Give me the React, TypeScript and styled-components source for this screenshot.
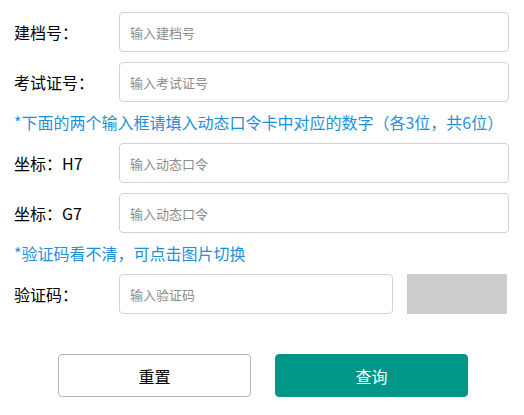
import styled, { createGlobalStyle } from "styled-components";

const Global = createGlobalStyle`
  html, body {
    margin: 0;
    padding: 0;
    background: #fff;
  }
  body {
    font-family: "Microsoft YaHei", "Noto Sans CJK SC", "Noto Sans", sans-serif;
  }
  * {
    box-sizing: border-box;
  }
`;

const Form = styled.form`
  width: 524px;
  padding: 12px 15px 0 14px;
  display: flex;
  flex-direction: column;
  gap: 10px;
`;

const Row = styled.div`
  display: flex;
  align-items: center;
  height: 40px;
`;

const Label = styled.label`
  width: 105px;
  flex-shrink: 0;
  font-size: 16px;
  color: #000;
`;

const Input = styled.input<{ $width?: number }>`
  width: ${(p) => (p.$width ? `${p.$width}px` : "390px")};
  height: 40px;
  padding: 0 10px;
  border: 1px solid #d2d2d2;
  border-radius: 4px;
  font-size: 13px;
  font-family: inherit;
  color: #333;
  outline: none;

  &::placeholder {
    color: #8c8c8c;
  }
`;

const Hint = styled.div`
  height: 21px;
  line-height: 21px;
  font-size: 16px;
  color: #1e90d8;
  white-space: nowrap;
`;

const Captcha = styled.div`
  width: 100px;
  height: 40px;
  margin-left: 14px;
  background: #cccccc;
  cursor: pointer;
`;

const Actions = styled.div`
  display: flex;
  justify-content: center;
  gap: 24px;
  margin-top: 30px;
  padding-left: 3px;
`;

const Button = styled.button<{ $primary?: boolean }>`
  width: 193px;
  height: 43px;
  border-radius: 4px;
  font-size: 16px;
  font-family: inherit;
  cursor: pointer;
  border: 1px solid ${(p) => (p.$primary ? "#009688" : "#b5b5b5")};
  background: ${(p) => (p.$primary ? "#009688" : "#fff")};
  color: ${(p) => (p.$primary ? "#fff" : "#000")};
`;

export default function App() {
  return (
    <>
      <Global />
      <Form onSubmit={(e) => e.preventDefault()}>
        <Row>
          <Label>建档号：</Label>
          <Input placeholder="输入建档号" />
        </Row>
        <Row>
          <Label>考试证号：</Label>
          <Input placeholder="输入考试证号" />
        </Row>
        <Hint>*下面的两个输入框请填入动态口令卡中对应的数字（各3位，共6位）</Hint>
        <Row>
          <Label>坐标：H7</Label>
          <Input placeholder="输入动态口令" />
        </Row>
        <Row>
          <Label>坐标：G7</Label>
          <Input placeholder="输入动态口令" />
        </Row>
        <Hint>*验证码看不清，可点击图片切换</Hint>
        <Row>
          <Label>验证码：</Label>
          <Input $width={274} placeholder="输入验证码" />
          <Captcha />
        </Row>
        <Actions>
          <Button type="reset">重置</Button>
          <Button type="submit" $primary>
            查询
          </Button>
        </Actions>
      </Form>
    </>
  );
}
